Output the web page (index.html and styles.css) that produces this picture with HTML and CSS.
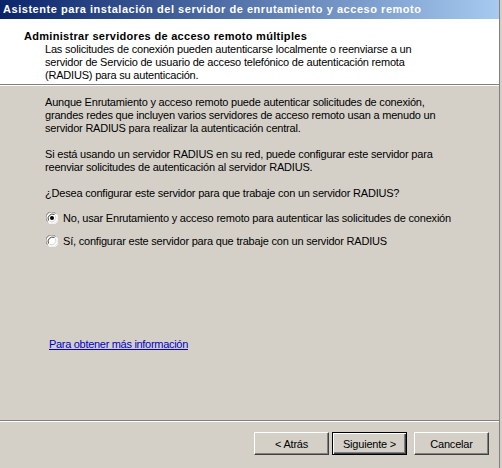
FILE: index.html
```html
<!DOCTYPE html>
<html lang="es">
<head>
  <meta charset="UTF-8" />
  <title>Asistente para instalación del servidor de enrutamiento y acceso remoto</title>
  <link rel="stylesheet" href="styles.css">
</head>
<body>
  <div class="window">
    <div class="titlebar">Asistente para instalación del servidor de enrutamiento y acceso remoto</div>

    <!-- wizard page header -->
    <div class="header">
      <div class="header-title">Administrar servidores de acceso remoto múltiples</div>
      <div class="header-sub">
        Las solicitudes de conexión pueden autenticarse localmente o reenviarse a un<br>
        servidor de Servicio de usuario de acceso telefónico de autenticación remota<br>
        (RADIUS) para su autenticación.
      </div>
    </div>

    <div class="content">
      <p>
        Aunque Enrutamiento y acceso remoto puede autenticar solicitudes de conexión,<br>
        grandes redes que incluyen varios servidores de acceso remoto usan a menudo un<br>
        servidor RADIUS para realizar la autenticación central.
      </p>
      <p>
        Si está usando un servidor RADIUS en su red, puede configurar este servidor para<br>
        reenviar solicitudes de autenticación al servidor RADIUS.
      </p>
      <p class="question">¿Desea configurar este servidor para que trabaje con un servidor RADIUS?</p>

      <label class="radio">
        <svg class="radio-box" width="12" height="12" viewBox="0 0 12 12">
          <circle cx="6" cy="6" r="5.5" fill="#fff"/>
          <path d="M1.5 9.5 A5.5 5.5 0 0 1 9.5 1.5" fill="none" stroke="#808080"/>
          <path d="M2.5 8.5 A4.5 4.5 0 0 1 8.5 2.5" fill="none" stroke="#404040"/>
          <path d="M10.5 2.5 A5.5 5.5 0 0 1 2.5 10.5" fill="none" stroke="#fff"/>
          <path d="M9.5 3.5 A4.5 4.5 0 0 1 3.5 9.5" fill="none" stroke="#d4d0c8"/>
          <circle cx="6" cy="6" r="2" fill="#000"/>
        </svg>
        No, usar Enrutamiento y acceso remoto para autenticar las solicitudes de conexión
      </label>
      <label class="radio">
        <svg class="radio-box" width="12" height="12" viewBox="0 0 12 12">
          <circle cx="6" cy="6" r="5.5" fill="#fff"/>
          <path d="M1.5 9.5 A5.5 5.5 0 0 1 9.5 1.5" fill="none" stroke="#808080"/>
          <path d="M2.5 8.5 A4.5 4.5 0 0 1 8.5 2.5" fill="none" stroke="#404040"/>
          <path d="M10.5 2.5 A5.5 5.5 0 0 1 2.5 10.5" fill="none" stroke="#fff"/>
          <path d="M9.5 3.5 A4.5 4.5 0 0 1 3.5 9.5" fill="none" stroke="#d4d0c8"/>
        </svg>
        Sí, configurar este servidor para que trabaje con un servidor RADIUS
      </label>

      <a class="more" href="#">Para obtener más información</a>
    </div>

    <div class="footer">
      <button class="btn">&lt; Atrás</button>
      <button class="btn default">Siguiente &gt;</button>
      <button class="btn cancel">Cancelar</button>
    </div>
  </div>
</body>
</html>
```

FILE: styles.css
```css
body {
  margin: 0;
  background: #d4d0c8;
  font-family: 'Liberation Sans', Arial, sans-serif;
  font-size: 11px;
  letter-spacing: -0.2px;
  color: #000;
}

.window {
  width: 499px;
  height: 468px;
  border-right: 1px solid #808080;
  display: flex;
  flex-direction: column;
}

.titlebar {
  height: 19px;
  line-height: 18px;
  padding-left: 3px;
  color: #fff;
  font-weight: bold;
  letter-spacing: 0.54px;
  background: linear-gradient(to right, #0a246a, #a6caf0);
  white-space: nowrap;
}

.header {
  background: #fff;
  height: 65px;
  border-bottom: 1px solid #808080;
  box-shadow: 0 1px 0 #fff;
  line-height: 13px;
  white-space: nowrap;
}

.header-title {
  margin: 11px 0 0 24px;
  font-weight: bold;
  letter-spacing: 0.3px;
}

.header-sub {
  margin-left: 45px;
}

.content {
  flex: 1;
  margin-top: 1px;
  padding: 10px 0 0 45px;
  display: flex;
  flex-direction: column;
  line-height: 13px;
  white-space: nowrap;
  border-bottom: 1px solid #808080;
  box-shadow: 0 1px 0 #fff;
}

.content p {
  margin: 0 0 13px;
}

.content .question {
  margin-bottom: 10px;
}

.radio {
  display: flex;
  align-items: center;
  gap: 5px;
  height: 16px;
  margin: 0 0 7px 1px;
}

.radio-box {
  flex: none;
}

.more {
  margin-top: auto;
  margin-bottom: 69px;
  margin-left: 4px;
  align-self: flex-start;
  color: #0000cc;
  letter-spacing: -0.3px;
}

.footer {
  box-sizing: border-box;
  height: 46px;
  margin-top: 1px;
  display: flex;
  justify-content: flex-end;
  align-items: flex-start;
  padding: 10px 10px 0 0;
  gap: 3px;
}

.btn {
  width: 75px;
  height: 23px;
  padding: 0;
  font-family: inherit;
  font-size: 11px;
  letter-spacing: -0.2px;
  color: #000;
  background: #d4d0c8;
  border: 1px solid;
  border-color: #fff #404040 #404040 #fff;
  box-shadow: inset -1px -1px #808080;
}

.btn.default {
  border-color: #000;
  box-shadow: inset 1px 1px #fff, inset -1px -1px #404040, inset -2px -2px #808080;
}

.btn.cancel {
  margin-left: 4px;
}
```
